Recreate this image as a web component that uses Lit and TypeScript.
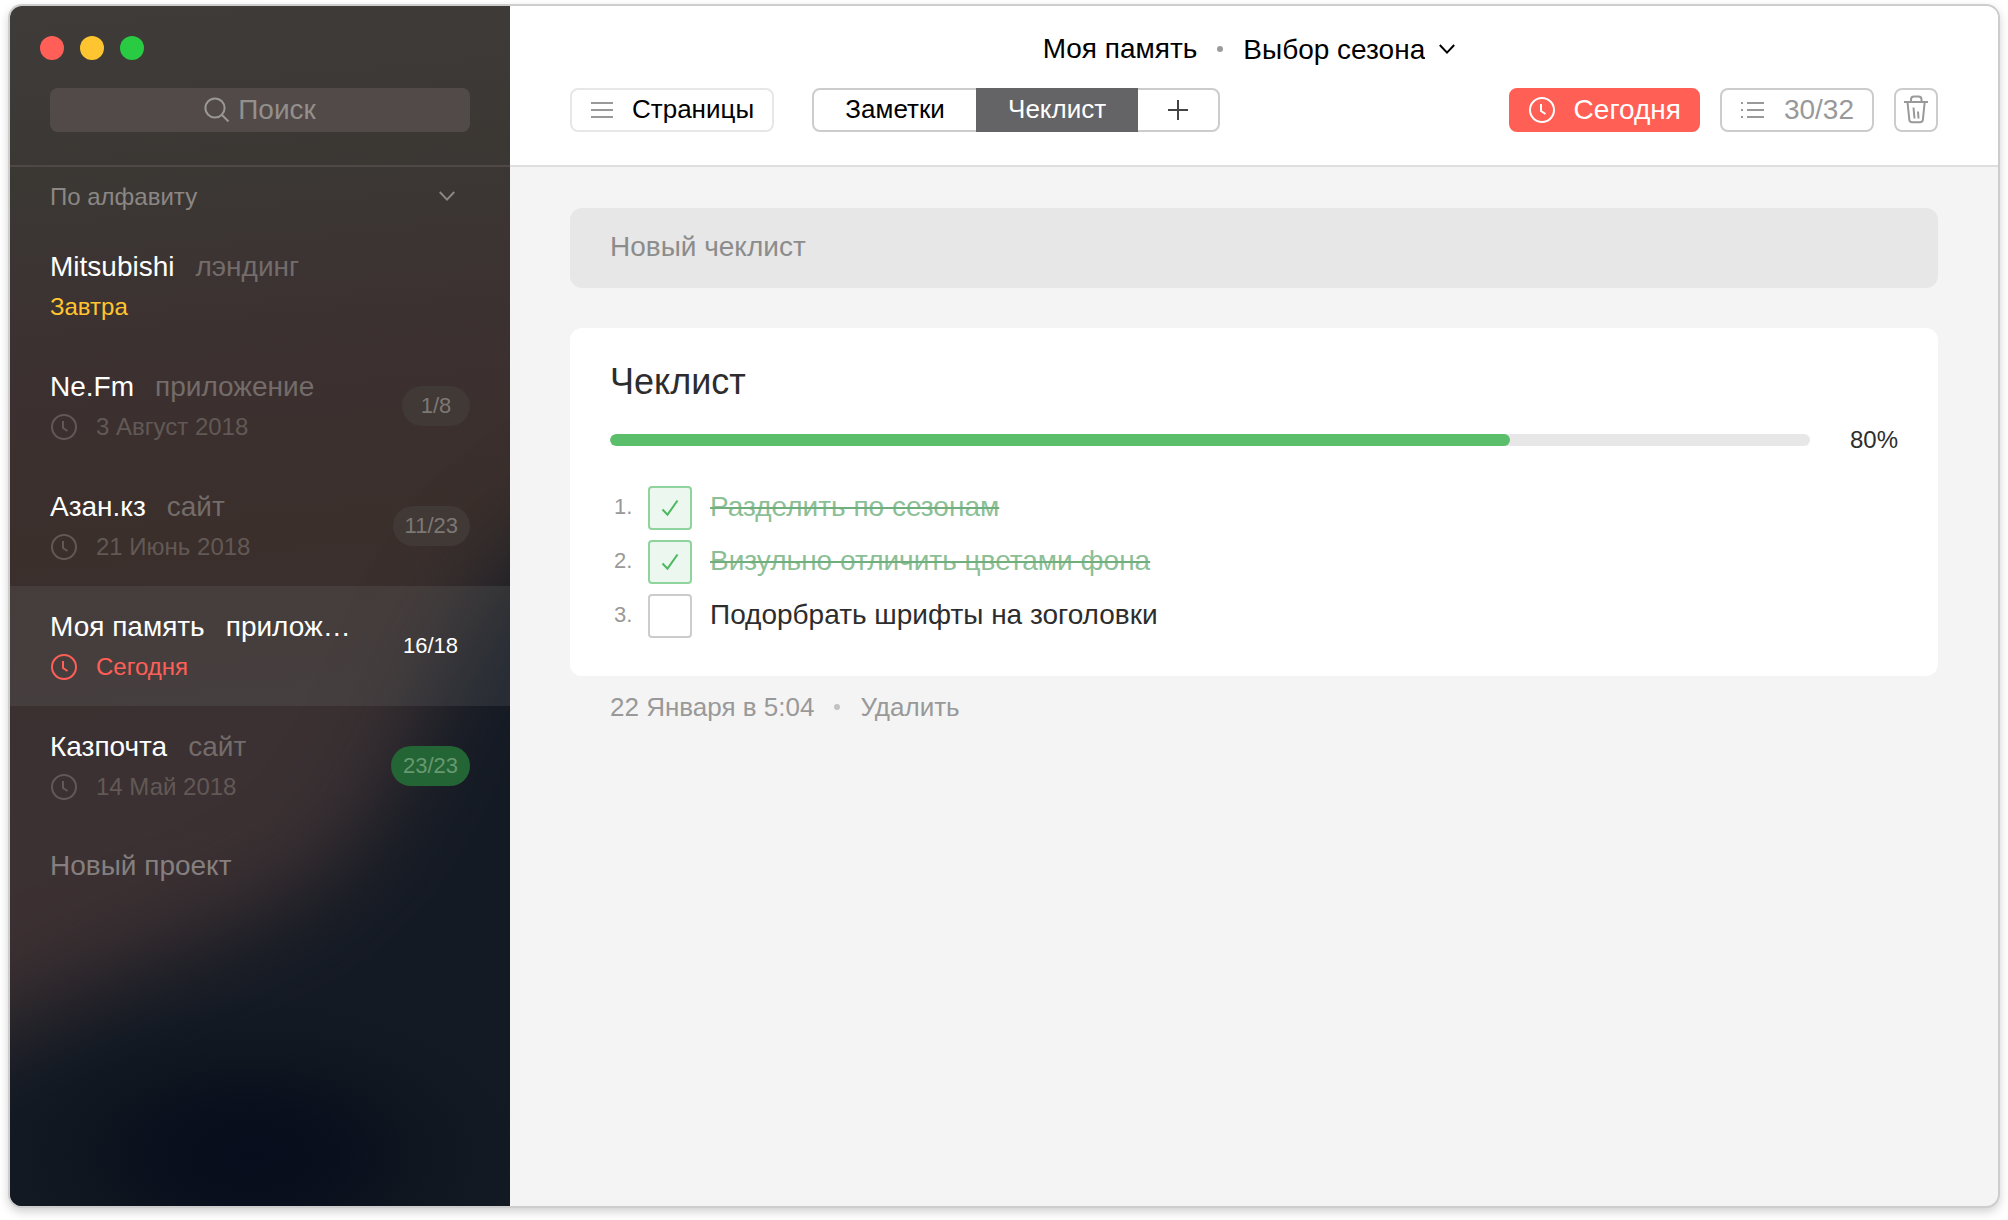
import { LitElement, html, css, nothing } from "lit";
import { customElement, property, state } from "lit/decorators.js";
import { classMap } from "lit/directives/class-map.js";

interface Project {
  name: string;
  kind: string;
  due: string;
  tone: "plain" | "soon" | "today";
  clock: boolean;
  count?: string;
  done?: boolean;
}

interface Task {
  text: string;
  done: boolean;
}

const clockIcon = html`<svg class="clock" width="28" height="28" viewBox="0 0 28 28" fill="none" stroke="currentColor" stroke-width="2" aria-hidden="true">
  <circle cx="14" cy="14" r="12" /><path d="M13 8V15l4.500 3" />
</svg>`;

const chevronIcon = html`<svg class="chevron" width="16" height="12" viewBox="0 0 16 12" fill="none" stroke="currentColor" stroke-width="2" aria-hidden="true">
  <path d="M.8 2 8 9.600 15.200 2" />
</svg>`;

const base = css`
  * { box-sizing: border-box; }
  button, input, select {
    font: inherit;
    color: inherit;
    letter-spacing: inherit;
    background: none;
    border: 0;
    border-radius: 0;
    margin: 0;
    padding: 0;
    outline-offset: 2px;
  }
  button, select { cursor: pointer; }
  select { appearance: none; }
  svg { display: block; flex: none; }
`;

@customElement("project-sidebar")
export class ProjectSidebar extends LitElement {
  @state() private selected = 3;

  private projects: Project[] = [
    { name: "Mitsubishi", kind: "лэндинг", due: "Завтра", tone: "soon", clock: false },
    { name: "Ne.Fm", kind: "приложение", due: "3 Август 2018", tone: "plain", clock: true, count: "1/8" },
    { name: "Азан.кз", kind: "сайт", due: "21 Июнь 2018", tone: "plain", clock: true, count: "11/23" },
    { name: "Моя память", kind: "прилож…", due: "Сегодня", tone: "today", clock: true, count: "16/18" },
    { name: "Казпочта", kind: "сайт", due: "14 Май 2018", tone: "plain", clock: true, count: "23/23", done: true },
  ];

  static styles = [
    base,
    css`
      :host {
        position: relative;
        isolation: isolate;
        overflow: hidden;
        display: flex;
        flex-direction: column;
        color: #fff;
        background: linear-gradient(175deg, #3e3b39 0%, #3b3834 14%, #3c3131 28%, #3a2f2b 44%, #3b3133 62%, #3c3032 76%, #392f2e 100%);
      }
      .backdrop { position: absolute; inset: 0; width: 100%; height: 100%; z-index: -1; }
      .top { padding: 30px 40px 33px 30px; border-bottom: 2px solid #4f4846; }
      .lights { display: flex; gap: 16px; margin-bottom: 28px; }
      .light { width: 24px; height: 24px; border-radius: 50%; background: #ff5f57; }
      .light.min { background: #ffc530; }
      .light.max { background: #28cb42; }
      .search {
        display: flex;
        align-items: center;
        justify-content: center;
        gap: 8px;
        height: 44px;
        margin-left: 10px;
        border-radius: 8px;
        background: #514a49;
        color: #9a9794;
        font-size: 28px;
        cursor: text;
      }
      .search input { field-sizing: content; min-width: 40px; max-width: 320px; height: 40px; outline: none; }
      .search input::placeholder { color: #93908c; opacity: 1; }
      .sort { display: grid; align-items: center; margin: 9px 40px 10px; height: 40px; color: #8b8784; font-size: 24px; }
      .sort select, .sort svg { grid-area: 1 / 1; }
      .sort select { width: 100%; height: 40px; }
      .sort svg { justify-self: end; margin-right: 15px; pointer-events: none; }
      .list { list-style: none; margin: 0; padding: 0; }
      .row {
        display: flex;
        align-items: center;
        gap: 24px;
        width: 100%;
        height: 120px;
        padding: 0 40px;
        text-align: left;
      }
      .row.on { background: rgba(120, 130, 125, 0.18); }
      .info { flex: 1; min-width: 0; display: flex; flex-direction: column; gap: 2px; }
      .title { display: flex; gap: 21px; font-size: 28px; line-height: 40px; white-space: nowrap; }
      .kind { color: #736c6a; min-width: 0; overflow: hidden; text-overflow: ellipsis; }
      .on .kind { color: #fff; }
      .due { display: flex; align-items: center; gap: 18px; font-size: 24px; line-height: 36px; color: #625956; }
      .due.soon { color: #ffc530; }
      .due.today { color: #ff5f57; }
      .count {
        min-width: 68px;
        padding: 0 12px;
        border-radius: 20px;
        background: #413936;
        color: #7d7774;
        font-size: 22px;
        line-height: 40px;
        text-align: center;
      }
      .on .count { background: none; color: #fff; }
      .count.full { background: #236534; color: #679871; }
      .new { width: 100%; height: 120px; padding: 0 40px 40px; text-align: left; font-size: 28px; line-height: 40px; color: #85807f; }
    `,
  ];

  render() {
    return html`
      <svg class="backdrop" viewBox="0 0 500 1200" preserveAspectRatio="none" aria-hidden="true">
        <defs>
          <filter id="soft" filterUnits="userSpaceOnUse" x="-400" y="300" width="1400" height="1400" color-interpolation-filters="sRGB"><feGaussianBlur stdDeviation="46" /></filter>
          <radialGradient id="core">
            <stop offset="0" stop-color="#080d1d" />
            <stop offset=".3" stop-color="#080e1c" stop-opacity=".9" />
            <stop offset=".7" stop-color="#0c151d" stop-opacity=".5" />
            <stop offset="1" stop-color="#101822" stop-opacity="0" />
          </radialGradient>
        </defs>
        <path
          filter="url(#soft)"
          fill="#141a24"
          d="M800 380C640 460 520 520 465 610C410 700 400 780 330 855C260 925 120 950 0 1020C-80 1060 -150 1090 -250 1170V1500H800Z"
        />
        <ellipse fill="url(#core)" cx="240" cy="1150" rx="290" ry="165" />
      </svg>
      <div class="top">
        <div class="lights">
          <button class="light" aria-label="Закрыть"></button>
          <button class="light min" aria-label="Свернуть"></button>
          <button class="light max" aria-label="Развернуть"></button>
        </div>
        <label class="search">
          <svg width="26" height="26" viewBox="0 0 26 26" fill="none" stroke="currentColor" stroke-width="2" aria-hidden="true">
            <circle cx="11" cy="11" r="9.600" /><path d="m18 18 6.500 6.500" />
          </svg>
          <input type="text" placeholder="Поиск" aria-label="Поиск" />
        </label>
      </div>
      <div class="sort">
        <select aria-label="Сортировка"><option>По алфавиту</option></select>
        ${chevronIcon}
      </div>
      <ul class="list">
        ${this.projects.map(
          (p, i) => html`<li>
            <button class=${classMap({ row: true, on: i === this.selected })} @click=${() => (this.selected = i)}>
              <span class="info">
                <span class="title"><span>${p.name}</span><span class="kind">${p.kind}</span></span>
                <span class=${classMap({ due: true, [p.tone]: true })}>${p.clock ? clockIcon : nothing}<span>${p.due}</span></span>
              </span>
              ${p.count ? html`<span class=${classMap({ count: true, full: !!p.done })}>${p.count}</span>` : nothing}
            </button>
          </li>`
        )}
      </ul>
      <button class="new">Новый проект</button>
    `;
  }
}

@customElement("check-card")
export class CheckCard extends LitElement {
  @property({ type: Number }) fill = 75;
  @state() private tasks: Task[] = [
    { text: "Разделить по сезонам", done: true },
    { text: "Визульно отличить цветами фона", done: true },
    { text: "Подорбрать шрифты на зоголовки", done: false },
  ];

  private toggle(i: number) {
    this.tasks = this.tasks.map((t, k) => (k === i ? { ...t, done: !t.done } : t));
  }

  static styles = [
    base,
    css`
      :host { display: block; color: #2d2d2d; }
      .card { padding: 32px 40px 38px; border-radius: 12px; background: #fff; }
      h2 { margin: 0; font-size: 36px; line-height: 44px; font-weight: 400; }
      .progress { display: flex; align-items: center; gap: 40px; height: 36px; margin: 18px 0 28px; font-size: 24px; }
      .track { flex: 1; height: 12px; border-radius: 6px; background: #e7e7e7; overflow: hidden; }
      .bar { height: 100%; border-radius: 6px; background: #5bbe6b; }
      ol { list-style: none; margin: 0; padding: 0; display: flex; flex-direction: column; gap: 10px; }
      li { display: flex; align-items: center; height: 44px; }
      .num { width: 38px; padding: 0 0 2px 4px; font-size: 22px; line-height: 42px; color: #999; }
      .box { display: grid; place-items: center; }
      .box input, .box svg { grid-area: 1 / 1; }
      .box input {
        appearance: none;
        width: 44px;
        height: 44px;
        border: 2px solid #ccc;
        border-radius: 4px;
        background: #fff;
        cursor: pointer;
      }
      .box input:checked { border-color: #8fd39d; background: #ecf7ef; }
      .box svg { color: #4cb860; pointer-events: none; }
      .text { padding: 0 18px 2px; font-size: 28px; line-height: 40px; }
      .text.done { color: #8dbf97; text-decoration: line-through 2px #71ae7d; }
      .meta { display: flex; align-items: center; gap: 20px; padding: 11px 40px; font-size: 26px; line-height: 40px; color: #999; }
      .dot { width: 6px; height: 6px; border-radius: 50%; background: #c2c2c2; }
    `,
  ];

  render() {
    return html`
      <section class="card">
        <h2>Чеклист</h2>
        <div class="progress">
          <div class="track" role="progressbar" aria-label="Чеклист" aria-valuenow=${this.fill}>
            <div class="bar" style="width:${this.fill}%"></div>
          </div>
          <span>80%</span>
        </div>
        <ol>
          ${this.tasks.map(
            (t, i) => html`<li>
              <span class="num">${i + 1}.</span>
              <span class="box">
                <input id="task-${i}" type="checkbox" .checked=${t.done} @change=${() => this.toggle(i)} />
                ${t.done
                  ? html`<svg width="18" height="18" viewBox="0 0 18 18" fill="none" stroke="currentColor" stroke-width="2" aria-hidden="true"><path d="m1.500 10.500 5 5.200L16.500 1.500" /></svg>`
                  : nothing}
              </span>
              <label for="task-${i}" class=${classMap({ text: true, done: t.done })}>${t.text}</label>
            </li>`
          )}
        </ol>
      </section>
      <footer class="meta">
        <span>22 Января в 5:04</span><span class="dot"></span><button>Удалить</button>
      </footer>
    `;
  }
}

@customElement("app-root")
export class AppRoot extends LitElement {
  @state() private tab = "Чеклист";

  static styles = [
    base,
    css`
      :host {
        display: block;
        min-height: 100vh;
        padding: 6px 10px 14px;
        box-sizing: border-box;
        background: #fff;
        color: #000;
        font-family: "Liberation Sans", Helvetica, Arial, sans-serif;
      }
      .window {
        display: grid;
        grid-template-columns: 500px minmax(0, 1fr);
        min-height: calc(100vh - 20px);
        border-radius: 12px;
        overflow: hidden;
        background: #f4f4f4;
        box-shadow: 0 0 0 2px #cdcdcd, 0 4px 10px 2px rgba(0, 0, 0, 0.18);
      }
      .bar { padding: 23px 60px 33px; border-bottom: 2px solid #dedede; background: #fff; }
      .heading { display: flex; align-items: center; justify-content: center; gap: 20px; height: 40px; padding-right: 10px; font-size: 28px; }
      h1 { margin: 0; font-size: 28px; font-weight: 400; }
      .dot { width: 6px; height: 6px; border-radius: 50%; background: #9b9b9b; }
      .pick { display: flex; align-items: center; gap: 14px; }
      .pick svg { pointer-events: none; }
      .tools { display: flex; align-items: center; gap: 20px; margin-top: 19px; }
      .tool {
        display: flex;
        align-items: center;
        gap: 20px;
        height: 44px;
        padding: 0 18px;
        border: 2px solid #ccc;
        border-radius: 8px;
        font-size: 28px;
        color: #999;
      }
      .pages { gap: 18px; margin-right: 18px; border-color: #e7e7e7; color: #000; font-size: 26px; }
      .pages svg { color: #999; }
      .pages span, .tab { padding-bottom: 2px; }
      .tabs { display: flex; height: 44px; border: 2px solid #ccc; border-radius: 8px; margin-right: auto; font-size: 26px; }
      .tab { min-width: 162px; margin: -2px 0; }
      .tab.on { background: #646466; color: #fff; }
      .add { display: grid; place-items: center; width: 80px; color: #444; }
      .today { gap: 18px; padding: 0 17px; border-color: #ff5f55; background: #ff5f55; color: #fff; }
      .trash { padding: 0 6px; }
      .body { display: flex; flex-direction: column; gap: 40px; padding: 41px 60px; }
      .fresh {
        width: 100%;
        height: 80px;
        padding: 0 40px 2px;
        border-radius: 12px;
        background: #e7e7e7;
        font-size: 28px;
      }
      .fresh::placeholder { color: #8c8c8c; opacity: 1; }
    `,
  ];

  render() {
    return html`
      <div class="window">
        <project-sidebar></project-sidebar>
        <main>
          <header class="bar">
            <div class="heading">
              <h1>Моя память</h1>
              <span class="dot"></span>
              <label class="pick"><select aria-label="Раздел"><option>Выбор сезона</option></select>${chevronIcon}</label>
            </div>
            <div class="tools">
              <button class="tool pages">
                <svg width="24" height="16" viewBox="0 0 24 16" stroke="currentColor" stroke-width="2" aria-hidden="true"><path d="M1 1h22M1 8h22M1 15h22" /></svg>
                <span>Страницы</span>
              </button>
              <div class="tabs">
                ${["Заметки", "Чеклист"].map(
                  (t) => html`<button class=${classMap({ tab: true, on: t === this.tab })} @click=${() => (this.tab = t)}>${t}</button>`
                )}
                <button class="add" aria-label="Добавить">
                  <svg width="20" height="20" viewBox="0 0 20 20" stroke="currentColor" stroke-width="2" aria-hidden="true"><path d="M10 0v20M0 10h20" /></svg>
                </button>
              </div>
              <button class="tool today">${clockIcon}<span>Сегодня</span></button>
              <button class="tool">
                <svg width="24" height="16" viewBox="0 0 24 16" stroke="currentColor" stroke-width="2" aria-hidden="true">
                  <path d="M7 1h17M7 8h17M7 15h17M1 1h2M1 8h2M1 15h2" />
                </svg>
                <span>30/32</span>
              </button>
              <button class="tool trash" aria-label="Удалить">
                <svg width="28" height="32" viewBox="0 0 28 32" fill="none" stroke="currentColor" stroke-width="2" aria-hidden="true">
                  <path d="M2 8h24M9 8V5.500a3 3 0 0 1 3-3h4.500a3 3 0 0 1 3 3V8M5.500 8l1.800 17.500a3 3 0 0 0 3 2.800h7.600a3 3 0 0 0 3-2.800L22.700 8M11.500 13.500l1 11M16 17.500l.5 7" />
                </svg>
              </button>
            </div>
          </header>
          <div class="body">
            <input class="fresh" type="text" placeholder="Новый чеклист" aria-label="Новый чеклист" />
            <check-card></check-card>
          </div>
        </main>
      </div>
    `;
  }
}
